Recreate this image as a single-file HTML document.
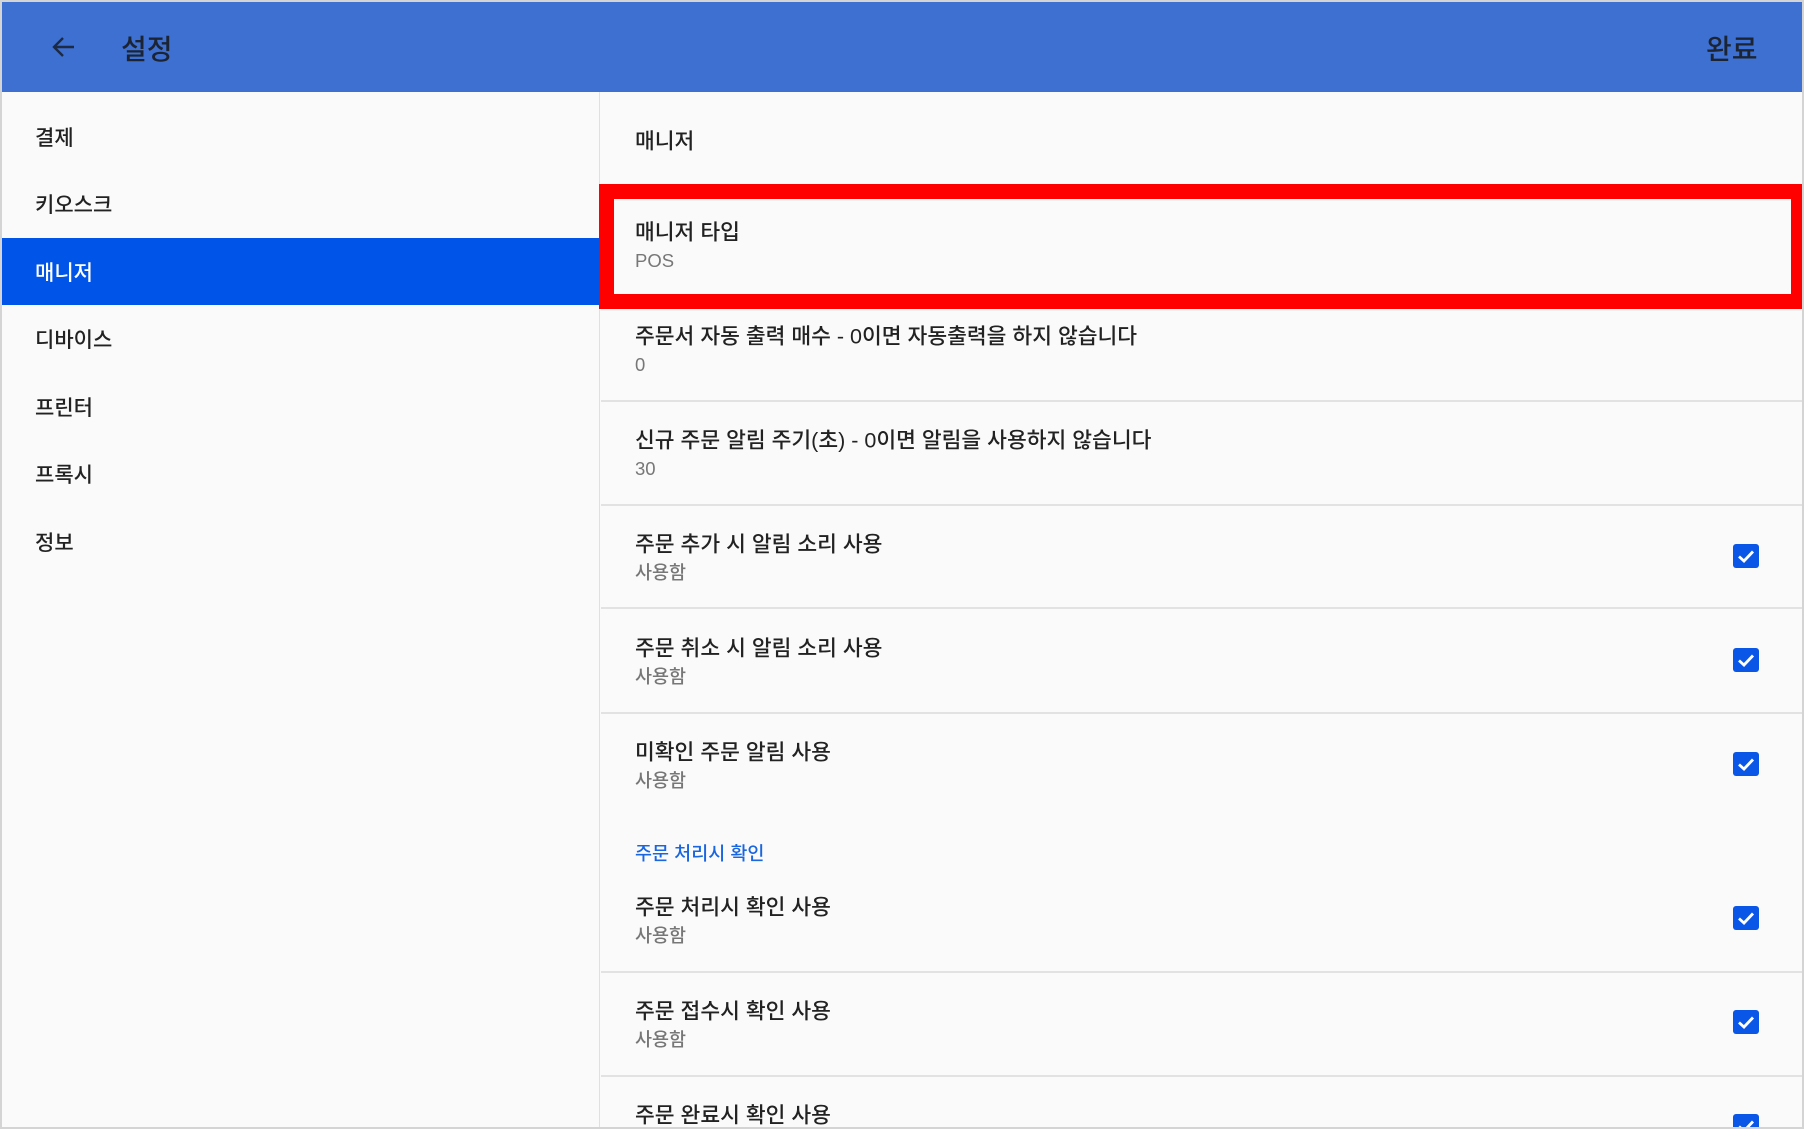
<!DOCTYPE html>
<html><head><meta charset="utf-8"><style>
*{margin:0;padding:0;box-sizing:border-box}
body{width:1804px;height:1129px;overflow:hidden;background:#fafafa;font-family:"Liberation Sans","Noto Sans CJK KR",sans-serif;position:relative;color:#222}
.frame{position:absolute;left:0;top:0;width:1804px;height:1129px;border:2px solid #d4d4d4}
.clip{position:absolute;left:0;top:0;width:1804px;height:1127px;overflow:hidden}
.hdr{position:absolute;left:2px;top:2px;width:1800px;height:90px;background:#3d70d0}
.abs{position:absolute;white-space:nowrap}
.side{position:absolute;left:2px;top:92px;width:598px;height:1035px;border-right:1px solid #e0e0e0}
.si{position:absolute;left:35px;font-size:21px;font-weight:500;color:#222;transform:translateY(-50%)}
.sel{position:absolute;left:2px;top:238px;width:598px;height:67px;background:#0055e8}
.t{position:absolute;left:635px;font-size:21.5px;font-weight:500;color:#222;transform:translateY(-50%);white-space:nowrap}
.s{position:absolute;left:635px;font-size:18.5px;font-weight:500;color:#777;transform:translateY(-50%)}
.div{position:absolute;left:601px;width:1201px;height:2px;background:#e2e2e2}
.cb{position:absolute;left:1733px;width:26px;height:24px;background:#0a56e6;border-radius:3px;transform:translateY(-50%)}
</style></head><body>
<div class="clip">
<div class="hdr"></div>
<svg class="abs" style="left:50px;top:33px" width="28" height="28" viewBox="0 0 28 28"><path d="M24 14H5M13 5l-9 9 9 9" stroke="#1c2a44" stroke-width="2.4" fill="none"/></svg>
<div class="abs" style="left:121px;top:28px;font-size:28px;font-weight:500;color:#1c2433">설정</div>
<div class="abs" style="left:1706px;top:28px;font-size:28px;font-weight:500;color:#1c2433">완료</div>
<div class="side"></div>
<div class="sel"></div>
<div class="si" style="top:137px">결제</div>
<div class="si" style="top:204px">키오스크</div>
<div class="si" style="top:272px;color:#fff">매니저</div>
<div class="si" style="top:339px">디바이스</div>
<div class="si" style="top:407px">프린터</div>
<div class="si" style="top:474px">프록시</div>
<div class="si" style="top:542px">정보</div>

<div class="t" style="top:140px">매니저</div>

<div class="abs" style="left:599px;top:184px;width:1205px;height:125px;border:15px solid #ff0000;border-right-width:13px"></div>
<div class="t" style="top:231px">매니저 타입</div>
<div class="s" style="top:261px">POS</div>

<div class="t" style="top:335px">주문서 자동 출력 매수 - 0이면 자동출력을 하지 않습니다</div>
<div class="s" style="top:365px">0</div>
<div class="div" style="top:400px"></div>
<div class="t" style="top:439px">신규 주문 알림 주기(초) - 0이면 알림을 사용하지 않습니다</div>
<div class="s" style="top:469px">30</div>
<div class="div" style="top:504px"></div>
<div class="t" style="top:543px">주문 추가 시 알림 소리 사용</div>
<div class="s" style="top:572px">사용함</div>
<div class="cb" style="top:556px"><svg width="26" height="24" viewBox="0 0 26 24"><path d="M6 12.5l5 4.5L20 7.5" stroke="#fff" stroke-width="2.8" fill="none"/></svg></div>
<div class="div" style="top:607px"></div>
<div class="t" style="top:647px">주문 취소 시 알림 소리 사용</div>
<div class="s" style="top:676px">사용함</div>
<div class="cb" style="top:660px"><svg width="26" height="24" viewBox="0 0 26 24"><path d="M6 12.5l5 4.5L20 7.5" stroke="#fff" stroke-width="2.8" fill="none"/></svg></div>
<div class="div" style="top:712px"></div>
<div class="t" style="top:751px">미확인 주문 알림 사용</div>
<div class="s" style="top:780px">사용함</div>
<div class="cb" style="top:764px"><svg width="26" height="24" viewBox="0 0 26 24"><path d="M6 12.5l5 4.5L20 7.5" stroke="#fff" stroke-width="2.8" fill="none"/></svg></div>
<div class="abs" style="left:635px;top:853px;transform:translateY(-50%);font-size:18.5px;font-weight:500;color:#1a66e0">주문 처리시 확인</div>
<div class="t" style="top:906px">주문 처리시 확인 사용</div>
<div class="s" style="top:935px">사용함</div>
<div class="cb" style="top:918px"><svg width="26" height="24" viewBox="0 0 26 24"><path d="M6 12.5l5 4.5L20 7.5" stroke="#fff" stroke-width="2.8" fill="none"/></svg></div>
<div class="div" style="top:971px"></div>
<div class="t" style="top:1010px">주문 접수시 확인 사용</div>
<div class="s" style="top:1039px">사용함</div>
<div class="cb" style="top:1022px"><svg width="26" height="24" viewBox="0 0 26 24"><path d="M6 12.5l5 4.5L20 7.5" stroke="#fff" stroke-width="2.8" fill="none"/></svg></div>
<div class="div" style="top:1075px"></div>
<div class="t" style="top:1114px">주문 완료시 확인 사용</div>
<div class="cb" style="top:1126px"><svg width="26" height="24" viewBox="0 0 26 24"><path d="M6 12.5l5 4.5L20 7.5" stroke="#fff" stroke-width="2.8" fill="none"/></svg></div>
</div>
<div class="frame"></div>
</body></html>
